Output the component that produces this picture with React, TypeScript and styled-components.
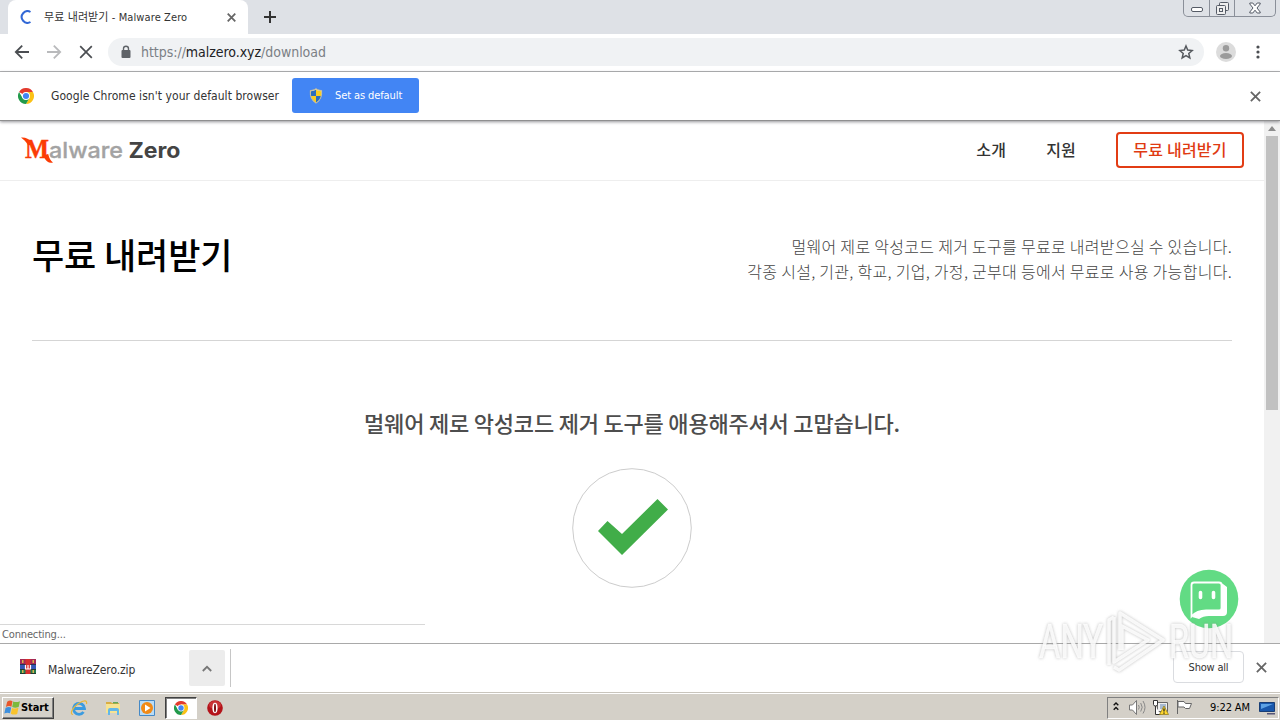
import React from 'react';
import styled, { createGlobalStyle, css } from 'styled-components';

const ui = '"DejaVu Sans Condensed", "Noto Sans CJK KR", sans-serif';
const kr = '"Noto Sans CJK KR", "Noto Sans", sans-serif';

const GlobalStyle = createGlobalStyle`
  * { box-sizing: border-box; }
  body { margin: 0; overflow: hidden; background: #fff; }
  svg { display: block; flex: none; }
  button { padding: 0; margin: 0; border: 0; background: none; font-family: inherit; }
`;

const Screen = styled.div`
  position: relative;
  width: 1280px;
  height: 720px;
  display: flex;
  flex-direction: column;
  overflow: hidden;
  font-family: ${ui};
  background: #fff;
`;

const Label = styled.span<{ $size?: number; $track?: number; $color?: string; $bold?: boolean }>`
  font-size: ${p => p.$size ?? 11}px;
  letter-spacing: ${p => p.$track ?? 0}px;
  color: ${p => p.$color ?? '#333'};
  font-weight: ${p => (p.$bold ? 700 : 400)};
  line-height: 16px;
  white-space: nowrap;
`;

const TabStrip = styled.div`
  height: 34px;
  flex: none;
  display: flex;
  align-items: flex-start;
  background: #dee1e6;
  padding-left: 8px;
`;

const Tab = styled.div`
  width: 240px;
  height: 34px;
  display: flex;
  align-items: center;
  padding: 0 12px 0 12px;
  background: #fff;
  border-radius: 8px 8px 0 0;
`;

const TabTitle = styled.div`
  flex: 1;
  display: flex;
  padding: 1px 0 0 10px;
`;

const NewTab = styled.button`
  width: 44px;
  height: 34px;
  display: grid;
  place-items: center;
`;

const WindowControls = styled.div`
  margin-left: auto;
  margin-right: 4px;
  display: flex;
  height: 17px;
  border: 1px solid #8a8f99;
  border-top: 0;
  border-radius: 0 0 5px 5px;
`;

const WindowButton = styled.button<{ $w: number }>`
  width: ${p => p.$w}px;
  height: 16px;
  display: grid;
  place-items: center;
  & + & { border-left: 1px solid #8a8f99; }
`;

const Toolbar = styled.div`
  height: 38px;
  flex: none;
  display: flex;
  align-items: center;
  border-bottom: 1px solid #b3b4b6;
  padding: 0 12px 2px 14px;
`;

const NavButtons = styled.div`
  display: flex;
  gap: 16px;
  margin-right: 14px;
`;

const Omnibox = styled.div`
  width: 1096px;
  height: 28px;
  display: flex;
  align-items: center;
  border-radius: 14px;
  background: #f0f2f4;
  padding: 0 9px 0 12px;
`;

const Url = styled.div`
  flex: 1;
  padding-left: 9px;
  font: 14px/20px ${ui};
  letter-spacing: -0.04px;
  color: #7b8085;
  white-space: nowrap;
  b { font-weight: 400; color: #202124; }
`;

const Avatar = styled.div`
  margin: 0 15px 0 12px;
`;

const InfoBar = styled.div`
  height: 49px;
  flex: none;
  display: flex;
  align-items: center;
  padding: 0 19px 0 18px;
  border-bottom: 1px solid #8f8f90;
  box-shadow: 0 1px 3px rgba(60, 60, 70, 0.55);
  position: relative;
`;

const InfoText = styled.div`
  width: 241px;
  display: flex;
  margin-left: 17px;
`;

const DefaultButton = styled.button`
  width: 127px;
  height: 35px;
  display: flex;
  align-items: center;
  gap: 11px;
  padding-left: 16px;
  margin: 0 auto 1px 0;
  border-radius: 3px;
  background: #4285f4;
`;

const Viewport = styled.div`
  height: 522px;
  flex: none;
  display: flex;
`;

const Page = styled.main`
  width: 1264px;
  font-family: ${kr};
`;

const Header = styled.header`
  height: 60px;
  display: flex;
  align-items: center;
  border-bottom: 1px solid #eee;
  padding: 0 20px 1px;
`;

const Nav = styled.nav`
  margin-left: auto;
  display: flex;
  align-items: center;
  gap: 40px;
`;

const NavLink = styled.a<{ $boxed?: boolean }>`
  font-size: 16px;
  line-height: 32px;
  padding-bottom: 2px;
  font-weight: 500;
  letter-spacing: 0.2px;
  white-space: nowrap;
  color: #333;
  ${p => p.$boxed && css`
    width: 128px;
    height: 36px;
    text-align: center;
    line-height: 31px;
    letter-spacing: 0.2px;
    color: #e03a12;
    border: 2px solid #e23c14;
    border-radius: 4px;
  `}
`;

const Intro = styled.section`
  height: 160px;
  margin: 0 32px;
  display: flex;
  justify-content: space-between;
  border-bottom: 1px solid #d5d5d5;
`;

const Title = styled.h1`
  margin: 48px 0 0;
  font-size: 35px;
  line-height: 50px;
  font-weight: 500;
  letter-spacing: -0.1px;
  color: #000;
`;

const Description = styled.p`
  margin: 53px 0 0;
  font-size: 16px;
  line-height: 25px;
  font-weight: 300;
  letter-spacing: 0.3px;
  text-align: right;
  color: #444;
  white-space: nowrap;
`;

const Thanks = styled.section`
  display: flex;
  flex-direction: column;
  align-items: center;
  padding-top: 65px;
`;

const ThanksTitle = styled.h2`
  margin: 0 0 30px;
  font-size: 22px;
  line-height: 32px;
  font-weight: 500;
  letter-spacing: -0.2px;
  color: #4d4d4d;
  white-space: nowrap;
`;

const ScrollTrack = styled.div`
  width: 16px;
  background: #f1f1f1;
  display: flex;
  flex-direction: column;
  align-items: center;
  padding-top: 5px;
`;

const ScrollThumb = styled.div`
  width: 12px;
  height: 274px;
  margin-top: 5px;
  background: #c1c1c1;
`;

const StatusBubble = styled.div`
  position: absolute;
  left: 0;
  top: 624px;
  width: 425px;
  height: 19px;
  display: flex;
  align-items: center;
  padding: 1px 0 0 2px;
  background: #fff;
  border-top: 1px solid #d8d8d8;
`;

const ChatButton = styled.div`
  position: absolute;
  left: 1179px;
  top: 569px;
`;

const Shelf = styled.div`
  height: 49px;
  flex: none;
  display: flex;
  align-items: center;
  border-top: 1px solid #a9a9a9;
  padding: 0 13px 0 20px;
`;

const ShelfIcon = styled.div`
  padding-bottom: 2px;
`;

const FileName = styled.div`
  width: 153px;
  padding: 3px 0 0 12px;
  display: flex;
`;

const MenuButton = styled.button`
  width: 36px;
  height: 36px;
  display: grid;
  place-items: center;
  border-radius: 2px;
  background: #ececec;
`;

const Divider = styled.div`
  width: 1px;
  height: 38px;
  margin-left: 5px;
  background: #c6c6c6;
`;

const ShowAll = styled.button`
  width: 71px;
  height: 32px;
  margin: 0 12px 2px auto;
  border: 1px solid #dadce0;
  border-radius: 4px;
`;

const Taskbar = styled.div`
  height: 28px;
  flex: none;
  display: flex;
  align-items: center;
  background: #d4d0c8;
  border-top: 1px solid #c9c5bd;
  box-shadow: inset 0 1px 0 #fff;
  padding: 2px 1px 0 2px;
`;

const StartButton = styled.button`
  width: 52px;
  height: 22px;
  display: flex;
  align-items: center;
  padding-left: 1px;
  border: 1px solid;
  border-color: #fff #404040 #404040 #fff;
  box-shadow: inset -1px -1px 0 #808080;
`;

const QuickLaunch = styled.div`
  display: flex;
  align-items: center;
  margin-left: 8px;
`;

const TaskIcon = styled.div<{ $active?: boolean }>`
  width: ${p => (p.$active ? 32 : 34)}px;
  height: 22px;
  display: grid;
  place-items: center;
  ${p => p.$active && css`
    margin: 0 1px;
    background: #fff;
    border: 1px solid;
    border-color: #404040 #fff #fff #404040;
    box-shadow: inset 1px 1px 0 #808080;
  `}
`;

const Tray = styled.div`
  width: 172px;
  height: 22px;
  margin-left: auto;
  display: flex;
  align-items: center;
  padding: 0 2px 0 5px;
  border: 1px solid;
  border-color: #808080 #fff #fff #808080;
`;

const Clock = styled.div`
  width: 68px;
  display: flex;
  padding-left: 13px;
`;

const Watermark = styled.svg`
  position: absolute;
  left: 1030px;
  top: 600px;
  pointer-events: none;
  filter: drop-shadow(0 0 1.5px rgba(120, 120, 120, 0.55));
`;

const Cross = ({ size = 10, color = '#666', w = 1.8 }: { size?: number; color?: string; w?: number }) => (
  <svg width={size} height={size} viewBox="0 0 10 10" stroke={color} strokeWidth={w * 10 / size}>
    <path d="M.8.8 9.2 9.2M9.2.8.8 9.2" />
  </svg>
);

const Arrow = ({ color, flip }: { color: string; flip?: boolean }) => (
  <svg width="16" height="16" viewBox="0 0 16 16" fill="none" stroke={color} strokeWidth="1.8"
    transform={flip ? 'scale(-1 1)' : undefined}>
    <path d="M15 8H2M8.2 1.6 1.8 8l6.4 6.4" />
  </svg>
);

const ChromeLogo = ({ size }: { size: number }) => (
  <svg width={size} height={size} viewBox="0 0 48 48">
    <path fill="#e33b2e" d="M24 24 3.200 12A24 24 0 0 1 44.800 12H24z" />
    <path fill="#fbc116" d="M24 12h20.800A24 24 0 0 1 24 48l10.400-18z" />
    <path fill="#229a4b" d="M3.200 12 13.600 30 34.400 30 24 48A24 24 0 0 1 3.200 12z" />
    <circle cx="24" cy="24" r="11.800" fill="#fff" />
    <circle cx="24" cy="24" r="9.200" fill="#4285f4" />
  </svg>
);

const Shield = () => (
  <svg width="16" height="16" viewBox="0 0 16 16">
    <path fill="#e8e4cc" d="M8 .5Q11 2.400 14 2.200 15 11 8 15.500 1 11 2 2.200 5 2.400 8 .5z" />
    <path fill="#2c6ebd" d="M8 1.800V8H3Q2.700 5 3 3.300 6 3.200 8 1.800zM8 8h5q-.8 4-5 6.500z" />
    <path fill="#f8cd22" d="M8 1.800Q10 3.200 13 3.300q.3 2 0 4.700H8zM3 8h5v6.500Q3.800 12 3 8z" />
    <path fill="none" stroke="#b9b08a" strokeWidth=".8" d="M8 .8Q11 2.600 13.700 2.500 14.500 11 8 15 1.500 11 2.300 2.500 5 2.600 8 .8z" />
  </svg>
);

const LogoMark = () => (
  <svg width="164" height="34" viewBox="0 0 164 34">
    <path fill="#fb3c05" d="M1 4.500Q8 4 11 9L12 12 8 12Q5 7 1 4.500zM24.500 22 28.200 21Q29.500 27 33 29.500 27.500 31 24.500 25z" />
    <text x="5" y="25" fontFamily="Liberation Serif, serif" fontWeight="700" fontSize="27" fill="#fb3c05" stroke="#fb3c05" strokeWidth=".4" textLength="24" lengthAdjust="spacingAndGlyphs">M</text>
    <text x="29" y="25" fontFamily="Inter, sans-serif" fontWeight="500" fontSize="22" fill="#a3a3a3" stroke="#a3a3a3" strokeWidth=".3" textLength="74" lengthAdjust="spacingAndGlyphs">alware</text>
    <text x="108.500" y="25" fontFamily="Inter, sans-serif" fontWeight="700" fontSize="21.500" fill="#444" textLength="52" lengthAdjust="spacingAndGlyphs">Zero</text>
  </svg>
);

const CheckBadge = () => (
  <svg width="120" height="120" viewBox="0 0 120 120">
    <circle cx="60" cy="60" r="59.300" fill="#fff" stroke="#ccc" />
    <path fill="#41ad49" d="m26 63 9.500-10L50 66l35.500-35L96 41.500 50 87z" />
  </svg>
);

const ArchiveIcon = () => (
  <svg width="16" height="16" viewBox="0 0 16 16">
    <path fill="#a52a55" d="M0 0h16v5H0z" />
    <path fill="#3557b5" d="M0 5h16v5H0z" />
    <path fill="#23794b" d="M0 10h16v5H0z" />
    <path stroke="#222" strokeOpacity=".7" d="M0 5.500h16M0 10.500h16M0 14.500h16" />
    <path fill="#d62e2e" d="M5.500 0h5v15h-5z" />
    <path fill="#d7b34b" d="M2 1h1.500v3H2zM12.500 1H14v3h-1.500zM2 11h1.500v3H2zM12.500 11H14v3h-1.500z" />
    <path fill="none" stroke="#fff" strokeWidth="1.200" d="M5.500 6v4h5V6M8 6v4" />
  </svg>
);

const WindowsFlag = () => (
  <svg width="17" height="17" viewBox="0 0 16 16">
    <path fill="#e8562a" d="M3 2.500Q5.500.8 8 2L7 7.200Q4.500 6 1.800 7.500z" />
    <path fill="#7cb93c" d="M8.700 2.400q3 1.200 6.300-.4L13.800 7.500q-3 1.400-6.100.1z" />
    <path fill="#3d8fdd" d="M1.500 8.300Q4.300 6.800 6.800 8L5.700 13.400Q3 12.200.3 13.700z" />
    <path fill="#f9c32c" d="M7.500 8.400q3 1.300 6.100-.1L12.400 14q-3 1.400-6-.2z" />
  </svg>
);

const ExplorerE = () => (
  <svg width="18" height="18" viewBox="0 0 18 18" fill="none">
    <path stroke="#3b9be0" strokeWidth="2.800" d="M4 9.500h10.500A5.500 5.500 0 1 0 13.500 13" />
    <path stroke="#e9b83a" strokeWidth="1.200" d="M3 15.500C-1 15 3 8 8.500 4.500S17.500 1 16.500 5" />
  </svg>
);

const FolderIcon = () => (
  <svg width="18" height="18" viewBox="0 0 18 18">
    <path fill="#d8ad45" d="M2 3h5l1 1h7v3H2z" />
    <path fill="#f7e392" d="M2 5h14v9H2z" />
    <path fill="#63b7e8" d="M4 16v-5q0-2 2-2h7q2 0 2 2v5h-2v-4H6v4z" />
    <path fill="#65a859" d="M9 3h5v1.500H9z" />
  </svg>
);

const MediaIcon = () => (
  <svg width="16" height="16" viewBox="0 0 16 16">
    <path fill="#b9dcf6" stroke="#4589c6" d="M.5.5h15v15H.5z" />
    <circle cx="8" cy="8" r="6" fill="#f18a16" />
    <path fill="#fff" d="m6 4.500 5.500 3.500L6 11.500z" />
  </svg>
);

const OperaIcon = () => (
  <svg width="16" height="16" viewBox="0 0 16 16">
    <circle cx="8" cy="8" r="7.800" fill="#b4131a" />
    <ellipse cx="8" cy="5" rx="6" ry="4" fill="#d94a4a" opacity=".6" />
    <ellipse cx="8" cy="8" rx="2.600" ry="5.200" fill="#fff" />
    <ellipse cx="8" cy="8" rx="1" ry="4.300" fill="#7a0d12" />
  </svg>
);

const TrayIcons = () => (
  <svg width="84" height="18" viewBox="0 0 84 18">
    <path fill="none" stroke="#111" strokeWidth="1.400" d="m.7 6.200 2.300-2.200 2.300 2.200M.7 10.700l2.300-2.200 2.300 2.200" />
    <path fill="#fff" stroke="#777" d="M16.500 6h3l4-4.500v14L19.500 11h-3z" />
    <path fill="none" stroke="#888" d="M25.500 6q1.500 2.300 0 4.500M27.700 4q3 4.200 0 8.500M30 2q4 6.400 0 12.500" />
    <path fill="#eee" stroke="#666" d="M44.500 3.500h10v9h-10z" />
    <path fill="#a8bad0" d="M47 5h6v5h-6z" />
    <path fill="#fff" stroke="#333" d="M40.500 1.500v4q0 1.500 2 1.500t2-1.500v-4zM42.500 7v8.500h5" />
    <path fill="#ffd72e" stroke="#8b7411" strokeWidth=".7" d="m51 7 4.500 8.500h-9z" />
    <path stroke="#222" strokeWidth="1.300" d="M51 9.500v3M51 13.500v1.200" />
    <path fill="#fff" stroke="#666" d="M64.500 1v14M65 2.500h6l1.500 2h6l-2 5h-4L71 8h-6z" />
  </svg>
);

const Monitor = () => (
  <svg width="17" height="16" viewBox="0 0 17 16">
    <path fill="#1857ab" stroke="#193e75" d="M.5 2.500h15v9H.5z" />
    <path fill="#5da2e4" d="M2 4h12L2 9z" />
    <path fill="#557" d="M8 13h8v1.500H8z" />
  </svg>
);

export default function App() {
  return (
    <Screen>
      <GlobalStyle />
      <TabStrip>
        <Tab>
          <svg width="14" height="14" viewBox="0 0 14 14" fill="none" stroke="#3268d6" strokeWidth="2">
            <path d="M10.500 2A5.800 5.800 0 1 0 10.500 12" />
          </svg>
          <TabTitle><Label $size={11} $track={0.1}>무료 내려받기 - Malware Zero</Label></TabTitle>
          <Cross size={9} />
        </Tab>
        <NewTab>
          <svg width="12" height="12" stroke="#333" strokeWidth="2"><path d="M6 0v12M0 6h12" /></svg>
        </NewTab>
        <WindowControls>
          <WindowButton $w={25}>
            <svg width="12" height="12"><rect x=".5" y="5.500" width="11" height="4" rx="1.500" fill="#fff" stroke="#555b66" /></svg>
          </WindowButton>
          <WindowButton $w={25}>
            <svg width="13" height="13" fill="#eee" stroke="#555b66"><rect x="3.500" y=".5" width="9" height="8" rx="1" /><rect x=".5" y="3.500" width="9" height="9" rx="1" /><rect x="3.500" y="6.500" width="3" height="3" /></svg>
          </WindowButton>
          <WindowButton $w={41}>
            <svg width="12" height="12" fill="#fff" stroke="#555b66"><path d="M.8 1h3L6 3.800 8.200 1h3v1L8 6l3.200 4v1h-3L6 8.200 3.800 11h-3v-1L4 6 .8 2z" /></svg>
          </WindowButton>
        </WindowControls>
      </TabStrip>

      <Toolbar>
        <NavButtons>
          <Arrow color="#4b4e52" />
          <Arrow color="#b9babc" flip />
          <svg width="16" height="16" stroke="#4b4e52" strokeWidth="1.700"><path d="m2.200 2.200 11.600 11.600M13.800 2.200 2.200 13.800" /></svg>
        </NavButtons>
        <Omnibox>
          <svg width="12" height="14" viewBox="0 0 12 14">
            <rect x="1.500" y="5" width="9" height="8" rx="1" fill="#5f6368" />
            <path d="M3.500 6V3.800a2.500 2.500 0 0 1 5 0V6" fill="none" stroke="#5f6368" strokeWidth="1.400" />
          </svg>
          <Url>https://<b>malzero.xyz</b>/download</Url>
          <svg width="18" height="18" viewBox="0 0 24 24" fill="none" stroke="#55595e" strokeWidth="2">
            <path d="m12 4 2.300 5.400 5.900.6-4.500 4 1.400 5.900L12 16.800 6.900 19.900l1.400-5.900-4.500-4 5.900-.6z" />
          </svg>
        </Omnibox>
        <Avatar>
          <svg width="20" height="20" viewBox="0 0 20 20">
            <circle cx="10" cy="10" r="10" fill="#dcdcdc" />
            <circle cx="10" cy="6.300" r="3.200" fill="#9b9b9b" />
            <ellipse cx="10" cy="14" rx="6" ry="3" fill="#9b9b9b" />
          </svg>
        </Avatar>
        <svg width="14" height="14" fill="#4b4e52"><circle cx="7" cy="2" r="1.600" /><circle cx="7" cy="7" r="1.600" /><circle cx="7" cy="12" r="1.600" /></svg>
      </Toolbar>

      <InfoBar>
        <ChromeLogo size={16} />
        <InfoText><Label $size={12} $track={0.06}>Google Chrome isn't your default browser</Label></InfoText>
        <DefaultButton>
          <Shield />
          <Label $color="#fff" $size={11} $track={-0.1}>Set as default</Label>
        </DefaultButton>
        <Cross size={11} />
      </InfoBar>

      <Viewport>
        <Page>
          <Header>
            <LogoMark />
            <Nav>
              <NavLink>소개</NavLink>
              <NavLink>지원</NavLink>
              <NavLink $boxed>무료 내려받기</NavLink>
            </Nav>
          </Header>
          <Intro>
            <Title>무료 내려받기</Title>
            <Description>
              멀웨어 제로 악성코드 제거 도구를 무료로 내려받으실 수 있습니다.<br />
              각종 시설, 기관, 학교, 기업, 가정, 군부대 등에서 무료로 사용 가능합니다.
            </Description>
          </Intro>
          <Thanks>
            <ThanksTitle>멀웨어 제로 악성코드 제거 도구를 애용해주셔서 고맙습니다.</ThanksTitle>
            <CheckBadge />
          </Thanks>
        </Page>
        <ScrollTrack>
          <svg width="8" height="5"><path fill="#8c8c8c" d="m4 0 4 5H0z" /></svg>
          <ScrollThumb />
        </ScrollTrack>
      </Viewport>

      <Shelf>
        <ShelfIcon><ArchiveIcon /></ShelfIcon>
        <FileName><Label $size={12} $track={-0.1}>MalwareZero.zip</Label></FileName>
        <MenuButton>
          <svg width="10" height="7" fill="none" stroke="#777" strokeWidth="1.800"><path d="m.8 6 4.200-4.200L9.200 6" /></svg>
        </MenuButton>
        <Divider />
        <ShowAll><Label $size={11} $track={-0.2}>Show all</Label></ShowAll>
        <ShelfIcon><Cross size={11} /></ShelfIcon>
      </Shelf>

      <Taskbar>
        <StartButton>
          <WindowsFlag />
          <Label $bold $size={11} $track={-0.1} $color="#000">Start</Label>
        </StartButton>
        <QuickLaunch>
          <TaskIcon><ExplorerE /></TaskIcon>
          <TaskIcon><FolderIcon /></TaskIcon>
          <TaskIcon><MediaIcon /></TaskIcon>
          <TaskIcon $active><ChromeLogo size={14} /></TaskIcon>
          <TaskIcon><OperaIcon /></TaskIcon>
        </QuickLaunch>
        <Tray>
          <TrayIcons />
          <Clock><Label $size={11} $track={-0.1} $color="#000">9:22 AM</Label></Clock>
          <Monitor />
        </Tray>
      </Taskbar>

      <StatusBubble><Label $size={11} $track={-0.15} $color="#666">Connecting...</Label></StatusBubble>

      <ChatButton>
        <svg width="60" height="60" viewBox="0 0 60 60">
          <circle cx="30" cy="30" r="29.300" fill="#62db84" />
          <path fill="#fff" d="M42 13.500 48 18v25q0 4-4 4H30q-6 0-10 3l-7-2z" />
          <path fill="#62db84" stroke="#fff" strokeWidth="1.800" d="M15 13.500h25q2.500 0 2.500 2.500v23q0 2.500-2.500 2.500H27q-9 0-14.500 6V16q0-2.500 2.500-2.500z" />
          <path stroke="#fff" strokeWidth="3.600" strokeLinecap="round" d="M21.500 23.500v5M34.500 23.500v5" />
        </svg>
      </ChatButton>

      <Watermark width="212" height="80" viewBox="0 0 212 80">
        <g fill="#fff" fillOpacity=".85" stroke="#fff" strokeOpacity=".85" strokeWidth=".6" fontFamily="Roboto, sans-serif" fontSize="49">
          <text x="9" y="58" textLength="64" lengthAdjust="spacingAndGlyphs">ANY</text>
          <text x="139" y="58" textLength="64" lengthAdjust="spacingAndGlyphs">RUN</text>
        </g>
        <path fill="none" stroke="#fff" strokeWidth="3.500" strokeOpacity=".85" strokeLinejoin="round"
          d="M84 17 79 20V65M90 50V13l43 27-44 30-5-3M92 50V26l26 14-34 22V17" />
      </Watermark>
    </Screen>
  );
}
